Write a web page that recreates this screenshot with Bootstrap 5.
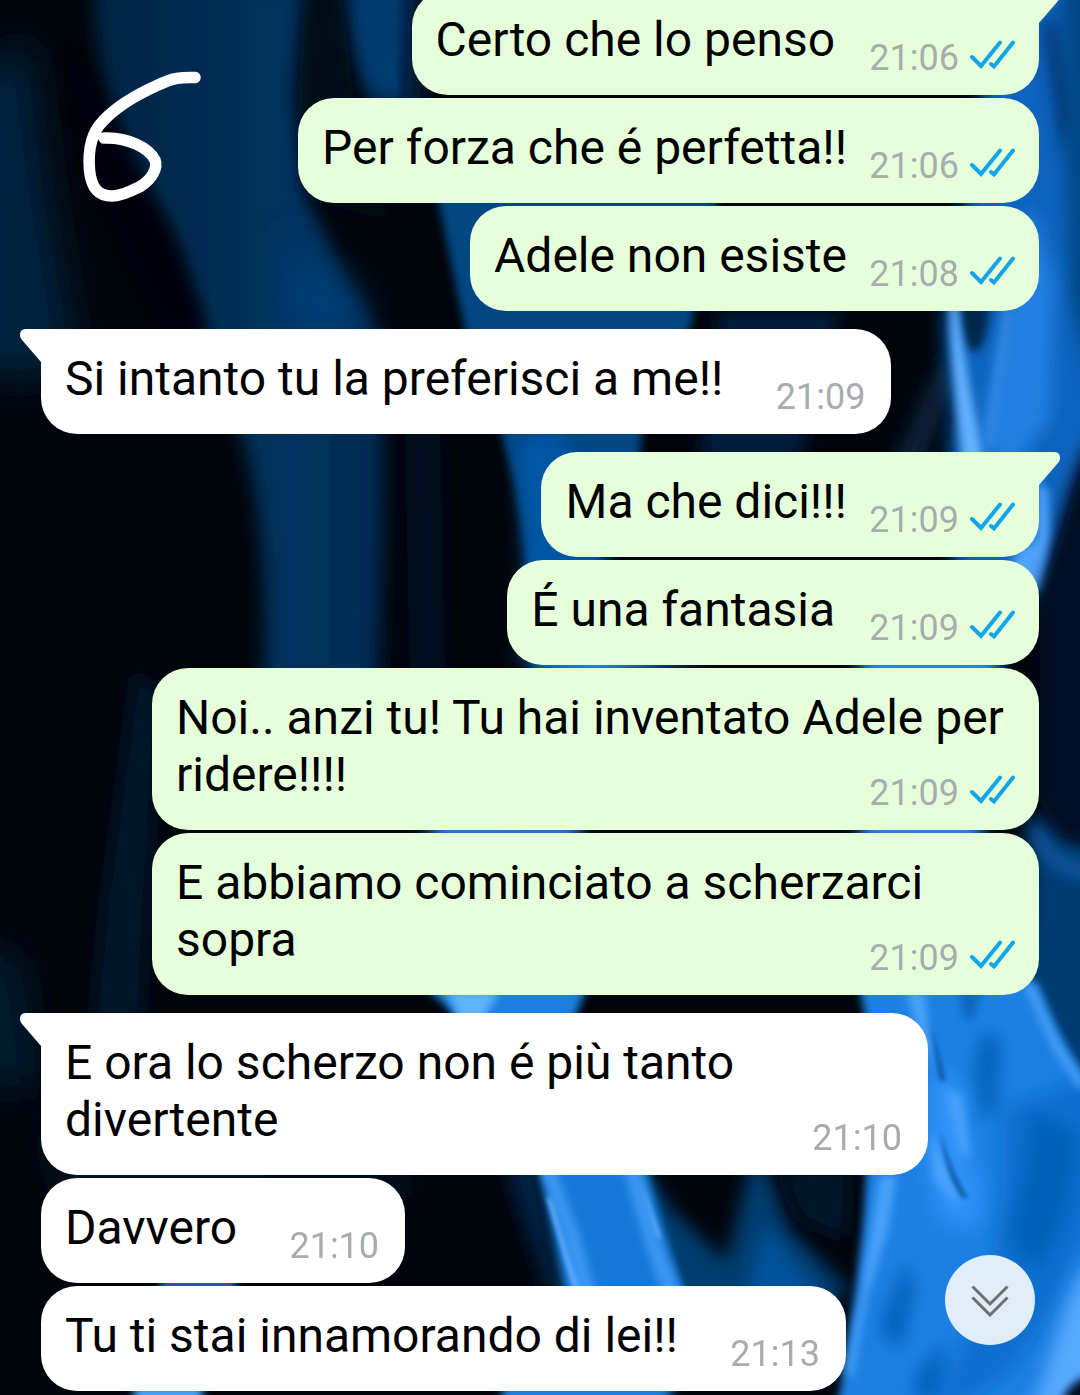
<!DOCTYPE html>
<html lang="it">
<head>
<meta charset="utf-8">
<meta name="viewport" content="width=device-width, initial-scale=1">
<title>Chat</title>
<link href="https://cdn.jsdelivr.net/npm/bootstrap@5.3.0/dist/css/bootstrap.min.css" rel="stylesheet">
<style>
  body { font-family: Roboto, "Noto Sans", sans-serif; background: #00060d; color: #000; overflow: hidden; }
  .wallpaper { z-index: -1; }
  .chat-log { gap: 3px; padding: 0 41px 4px; margin-top: -10px; }
  .bubble { max-width: 887px; padding: 21px 24px 27px; border-radius: 36px; font-size: 48px; line-height: 57px; }
  .bubble p { white-space: pre-wrap; }
  .bubble p::after { content: ""; display: inline-block; width: 168px; }
  .bubble-out { background: #e5ffdb; align-self: flex-end; }
  .bubble-in { background: #fff; align-self: flex-start; }
  .bubble-in p::after { width: 144px; }
  .bubble-in + .bubble-out, .bubble-out + .bubble-in { margin-top: 15px; }
  .tail-out { border-top-right-radius: 0; }
  .tail-in { border-top-left-radius: 0; }
  .tail { top: 0; width: 22px; height: 33px; }
  .tail-in .tail { left: -21px; }
  .tail-out .tail { right: -21px; transform: scaleX(-1); }
  .stamp { right: 24px; bottom: 19px; gap: 11px; font-size: 36px; line-height: 36px; color: #a8acad; }
  .bubble-in .stamp { right: 26px; }
  .ticks { width: 45px; height: 30px; margin-bottom: 6px; fill: none; stroke: #12a5e9; stroke-width: 4; stroke-linecap: round; }
  .doodle { left: 76px; top: 66px; width: 132px; height: 142px; }
  .jump { right: 45px; bottom: 50px; width: 90px; height: 90px; background: rgba(240, 246, 251, .93); }
</style>
<script src="https://cdn.jsdelivr.net/npm/bootstrap@5.3.0/dist/js/bootstrap.bundle.min.js"></script>
</head>
<body class="min-vh-100">

<svg class="wallpaper position-fixed top-0 start-0 w-100 h-100" viewBox="0 0 1080 1395" preserveAspectRatio="none" aria-hidden="true">
  <defs>
    <filter id="b2" x="-30%" y="-30%" width="160%" height="160%"><feGaussianBlur stdDeviation="2"/></filter>
    <filter id="b4" x="-30%" y="-30%" width="160%" height="160%"><feGaussianBlur stdDeviation="4"/></filter>
    <filter id="b9" x="-30%" y="-30%" width="160%" height="160%"><feGaussianBlur stdDeviation="9"/></filter>
    <filter id="b18" x="-30%" y="-30%" width="160%" height="160%"><feGaussianBlur stdDeviation="18"/></filter>
    <linearGradient id="veil" x1="0" x2="1"><stop offset="0" stop-color="#002444"/><stop offset=".7" stop-color="#00335f"/><stop offset="1" stop-color="#002a50"/></linearGradient>
  </defs>
  <rect width="1080" height="1395" fill="#00050b"/>
  <!-- dim smoke on the left -->
  <g filter="url(#b18)">
    <path d="M-30 80L30 40L50 200L74 340L40 380L-30 370Z" fill="#00203c"/>
    <path d="M-30 940L20 960L40 1090L-30 1080Z" fill="#001a30"/>
    <path d="M40 1130L400 1170L400 1200L60 1190Z" fill="#001426"/>
  </g>
  <path filter="url(#b9)" d="M135 670L160 690L142 1020L92 1020L104 900Z" fill="#00152c"/>
  <!-- left veils -->
  <path filter="url(#b9)" d="M92 -20L318 -20C302 40 298 110 306 180C318 240 350 280 376 335C388 400 384 540 378 690L264 690C266 580 262 500 240 430C215 350 196 320 176 250C140 170 100 130 92 -20Z" fill="url(#veil)"/>
  <path filter="url(#b9)" d="M60 40C90 60 120 150 170 230L205 330L160 330L100 200Z" fill="#00060d"/>
  <path filter="url(#b18)" d="M285 230L350 290L370 340L290 340Z" fill="#003c74"/>
  <path filter="url(#b9)" d="M342 -20L430 -20L418 110L370 100C350 70 342 30 342 -20Z" fill="#003a6e"/>
  <path filter="url(#b9)" d="M410 -20L430 -20L420 110L405 110Z" fill="#000c1c"/>
  <path filter="url(#b9)" d="M305 -20L340 -20L355 110L390 220L310 200L298 100Z" fill="#000a16"/>
  <path filter="url(#b4)" d="M436 190L720 190L690 330C650 370 640 430 640 460L540 680L526 560C520 480 490 390 465 330Z" fill="#004683"/>
  <path filter="url(#b9)" d="M518 440L560 430L620 600L600 680L534 680Z" fill="#0556a4"/>
  <path filter="url(#b9)" d="M405 430L440 430L445 680L410 680Z" fill="#001020"/>
  <path filter="url(#b9)" d="M720 310L840 310L800 460L700 460Z" fill="#001f3c"/>
  <path filter="url(#b9)" d="M945 350L955 380L920 470L890 470Z" fill="#08203a"/>
  <!-- right flame, upper part -->
  <path filter="url(#b9)" d="M1000 -20L1110 -20L1110 430C1075 450 1065 530 1040 590L960 700L950 440C960 400 935 330 950 300Z" fill="#0a64bd"/>
  <path filter="url(#b9)" d="M1044 20L1056 20L1076 120L1066 160Z" fill="#00285a"/>
  <path filter="url(#b9)" d="M1062 -20L1100 -20L1100 400L1070 300Z" fill="#004684"/>
  <path filter="url(#b9)" d="M1030 200L1055 280L1050 420L1010 470L980 440Z" fill="#2080e2"/>
  <path filter="url(#b4)" d="M958 300L990 300C988 330 984 350 974 352C964 348 960 330 958 300Z" fill="#00254b"/>
  <path filter="url(#b4)" d="M950 300L958 308C963 350 972 400 984 460L962 460C956 400 950 350 950 300Z" fill="#62b0ff"/>
  <path filter="url(#b4)" d="M1004 310L1014 310L996 420L990 460L985 440Z" fill="#3088e2"/>
  <path filter="url(#b4)" d="M1038 480L1048 490L1050 540L1042 590L1000 590L1018 550L1036 540Z" fill="#50a3fb"/>
  <path filter="url(#b9)" d="M1100 430C1076 470 1066 540 1040 590L1040 800L1058 834L1100 840Z" fill="#001126"/>
  <!-- right, middle part -->
  <path filter="url(#b9)" d="M1036 800C1050 850 1070 845 1110 840L1110 1110L1020 1010Z" fill="#003a70"/>
  <path filter="url(#b9)" d="M1032 825C1050 866 1072 872 1100 874" fill="none" stroke="#0858a4" stroke-width="16"/>
  <path filter="url(#b9)" d="M510 650L720 650L600 680ZM420 815L580 820L580 845L440 845ZM860 650L1000 650L980 850L860 845Z" fill="#2a86df"/>
  <!-- lower right flame -->
  <path filter="url(#b4)" d="M858 980L1036 980C1050 1010 1066 1060 1110 1100L1110 1420L836 1420C846 1340 862 1270 866 1170C880 1100 870 1040 858 980Z" fill="#1a80e2"/>
  <path filter="url(#b9)" d="M1000 1110L1100 1070L1110 1180C1080 1240 1070 1290 1040 1330C1010 1380 980 1400 930 1410C990 1300 1010 1220 1000 1110Z" fill="#0d70d0"/>
  <path filter="url(#b9)" d="M1030 1110L1076 1130C1080 1180 1062 1240 1036 1270C1020 1260 1010 1250 1012 1220C1024 1180 1030 1150 1030 1110ZM984 1030L1000 1040L996 1110L982 1120L974 1070ZM906 1260L914 1290L900 1350L880 1330ZM920 1370L946 1340L940 1400L912 1400Z" fill="#0060b8"/>
  <path filter="url(#b4)" d="M960 990L982 990L972 1022L962 1015Z" fill="#0a66bf"/>
  <path filter="url(#b4)" d="M1034 985C1044 1010 1060 1050 1084 1080L1080 1090L1054 1050L1024 985ZM906 990L924 990L934 1070L920 1040Z" fill="#4aa3fb"/>
  <path filter="url(#b9)" d="M930 1070L960 1080L974 1170L984 1190L976 1230L940 1220L928 1170Z" fill="#2e92f8"/>
  <path filter="url(#b4)" d="M946 1090L962 1096L970 1160L960 1150ZM930 1130L940 1150L960 1196L956 1204L934 1180ZM880 1176L896 1176L888 1230L866 1300L852 1380L846 1370L862 1290Z" fill="#4aa3fb"/>
  <path filter="url(#b2)" d="M930 1020L946 1080L940 1082ZM940 1130C948 1160 958 1180 968 1198L962 1198C950 1180 944 1160 940 1130Z" fill="#0a5cab"/>
  <path filter="url(#b9)" d="M1100 1250L1080 1275C1060 1310 1054 1360 1030 1410L1060 1410L1100 1370Z" fill="#58aaff"/>
  <path filter="url(#b4)" d="M1090 1376C1075 1380 1066 1390 1062 1402L1090 1402Z" fill="#000c1c"/>
  <!-- lower centre flame -->
  <path filter="url(#b4)" d="M424 985L588 985L570 1030L470 1030Z" fill="#1a7fe0"/>
  <path filter="url(#b4)" d="M446 990L500 990L480 1025L462 1025Z" fill="#5fb3ff"/>
  <path filter="url(#b9)" d="M504 1165L540 1165L566 1300L550 1300Z" fill="#002244"/>
  <path filter="url(#b9)" d="M640 1160L672 1210L726 1262L744 1190L754 1150L764 1160L790 1230L850 1290L840 1300L600 1300Z" fill="#003c70"/>
  <path filter="url(#b9)" d="M766 1225L800 1270L826 1300L744 1300Z" fill="#00529e"/>
  <path filter="url(#b9)" d="M780 1170L850 1170L846 1240L800 1220Z" fill="#00152a"/>
  <path filter="url(#b4)" d="M538 1160L644 1160L664 1230L686 1300L566 1300Z" fill="#1478d6"/>
  <path filter="url(#b4)" d="M538 1165L554 1165L578 1230L598 1300L578 1300L562 1230ZM622 1165L640 1168L656 1230L684 1300L664 1300L644 1240Z" fill="#3a97f2"/>
  <path filter="url(#b2)" d="M546 1196L552 1200L570 1260L582 1295L574 1292ZM640 1180L650 1205L662 1240L656 1236Z" fill="#5cacfc"/>
  <path filter="url(#b4)" d="M504 1384L680 1384L660 1405L500 1405Z" fill="#1f80dd"/>
  <path filter="url(#b4)" d="M134 1386L204 1386L200 1405L134 1405Z" fill="#4aa8ff"/>
  <path filter="url(#b4)" d="M160 1278L236 1278L236 1292L160 1292Z" fill="#1668bd"/>
</svg>

<!-- hand-drawn mark -->
<svg class="doodle position-absolute" viewBox="76 66 132 142" role="img" aria-label="6">
  <path d="M195 77.500C182 77 172 78 158 85C138 94 116 107 103 121C91 133 88 152 89.500 170C91 186 97 196 112 196C122 196 133 190 141 186C152 179 158 168 155 160C149 148 128 137 104 138" fill="none" stroke="#fff" stroke-width="11.500" stroke-linecap="round" stroke-linejoin="round"/>
</svg>

<main class="chat-log d-flex flex-column">
  <div class="bubble bubble-out tail-out position-relative">
    <svg class="tail position-absolute" viewBox="0 0 22 33" aria-hidden="true"><path d="M22 0H6C0 0-2 6 2 11L21 33H22Z" fill="#e5ffdb"/></svg>
    <p class="m-0">Certo che lo penso </p>
    <div class="stamp position-absolute d-flex align-items-end"><time>21:06</time><svg class="ticks" viewBox="0 0 45 30" aria-label="Letto"><path d="M2 17L11 26L30 2.500M21 24L24 26.500L43 2.500"/></svg></div>
  </div>
  <div class="bubble bubble-out position-relative">
    <p class="m-0">Per forza che é perfetta!!</p>
    <div class="stamp position-absolute d-flex align-items-end"><time>21:06</time><svg class="ticks" viewBox="0 0 45 30" aria-label="Letto"><path d="M2 17L11 26L30 2.500M21 24L24 26.500L43 2.500"/></svg></div>
  </div>
  <div class="bubble bubble-out position-relative">
    <p class="m-0">Adele non esiste</p>
    <div class="stamp position-absolute d-flex align-items-end"><time>21:08</time><svg class="ticks" viewBox="0 0 45 30" aria-label="Letto"><path d="M2 17L11 26L30 2.500M21 24L24 26.500L43 2.500"/></svg></div>
  </div>

  <div class="bubble bubble-in tail-in position-relative">
    <svg class="tail position-absolute" viewBox="0 0 22 33" aria-hidden="true"><path d="M22 0H6C0 0-2 6 2 11L21 33H22Z" fill="#fff"/></svg>
    <p class="m-0">Si intanto tu la preferisci a me!!</p>
    <div class="stamp position-absolute"><time>21:09</time></div>
  </div>

  <div class="bubble bubble-out tail-out position-relative">
    <svg class="tail position-absolute" viewBox="0 0 22 33" aria-hidden="true"><path d="M22 0H6C0 0-2 6 2 11L21 33H22Z" fill="#e5ffdb"/></svg>
    <p class="m-0">Ma che dici!!!</p>
    <div class="stamp position-absolute d-flex align-items-end"><time>21:09</time><svg class="ticks" viewBox="0 0 45 30" aria-label="Letto"><path d="M2 17L11 26L30 2.500M21 24L24 26.500L43 2.500"/></svg></div>
  </div>
  <div class="bubble bubble-out position-relative">
    <p class="m-0">É una fantasia </p>
    <div class="stamp position-absolute d-flex align-items-end"><time>21:09</time><svg class="ticks" viewBox="0 0 45 30" aria-label="Letto"><path d="M2 17L11 26L30 2.500M21 24L24 26.500L43 2.500"/></svg></div>
  </div>
  <div class="bubble bubble-out position-relative">
    <p class="m-0">Noi.. anzi tu! Tu hai inventato Adele per ridere!!!!</p>
    <div class="stamp position-absolute d-flex align-items-end"><time>21:09</time><svg class="ticks" viewBox="0 0 45 30" aria-label="Letto"><path d="M2 17L11 26L30 2.500M21 24L24 26.500L43 2.500"/></svg></div>
  </div>
  <div class="bubble bubble-out position-relative">
    <p class="m-0">E abbiamo cominciato a scherzarci sopra</p>
    <div class="stamp position-absolute d-flex align-items-end"><time>21:09</time><svg class="ticks" viewBox="0 0 45 30" aria-label="Letto"><path d="M2 17L11 26L30 2.500M21 24L24 26.500L43 2.500"/></svg></div>
  </div>

  <div class="bubble bubble-in tail-in position-relative">
    <svg class="tail position-absolute" viewBox="0 0 22 33" aria-hidden="true"><path d="M22 0H6C0 0-2 6 2 11L21 33H22Z" fill="#fff"/></svg>
    <p class="m-0">E ora lo scherzo non é più tanto divertente</p>
    <div class="stamp position-absolute"><time>21:10</time></div>
  </div>
  <div class="bubble bubble-in position-relative">
    <p class="m-0">Davvero</p>
    <div class="stamp position-absolute"><time>21:10</time></div>
  </div>
  <div class="bubble bubble-in position-relative">
    <p class="m-0">Tu ti stai innamorando di lei!!</p>
    <div class="stamp position-absolute"><time>21:13</time></div>
  </div>
</main>

<button type="button" class="jump btn border-0 rounded-circle p-0 position-fixed d-flex align-items-center justify-content-center" aria-label="Vai in fondo">
  <svg width="40" height="34" viewBox="0 0 40 34" fill="none" stroke="#707070" stroke-width="3" aria-hidden="true"><path d="M2.500 3.500L20 21L37.500 3.500M2.500 14.500L20 32L37.500 14.500"/></svg>
</button>
</body>
</html>
